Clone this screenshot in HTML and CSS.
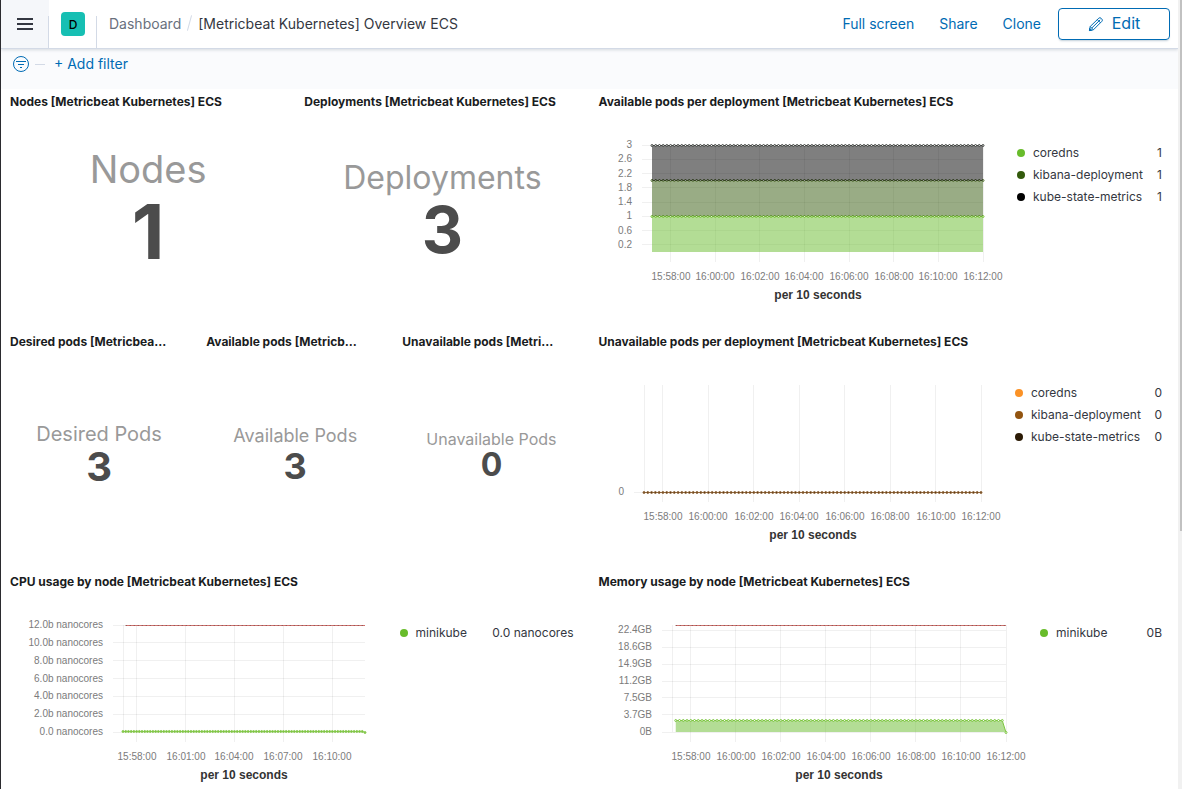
FILE: index.html
```html
<!DOCTYPE html>
<html lang="en">
<head>
<meta charset="utf-8">
<meta name="viewport" content="width=device-width, initial-scale=1">
<title>[Metricbeat Kubernetes] Overview ECS</title>
<link rel="stylesheet" href="styles.css">
</head>
<body>
<div class="app">
  <div class="page">
    <header class="header">
      <button class="menu-button" type="button" aria-label="Toggle navigation">
        <svg width="16" height="16" viewBox="0 0 16 16" fill="#343741"><path d="M0 2h16v2H0zM0 7h16v2H0zM0 12h16v2H0z"/></svg>
      </button>
      <div class="space"><button class="avatar" type="button" aria-label="Default space">D</button></div>
      <nav class="breadcrumbs" aria-label="Breadcrumbs">
        <a class="crumb" href="#">Dashboard</a>
        <span class="crumb-slash"></span>
        <span class="crumb-current">[Metricbeat Kubernetes] Overview ECS</span>
      </nav>
      <div class="actions">
        <button class="action" type="button">Full screen</button>
        <button class="action" type="button">Share</button>
        <button class="action" type="button">Clone</button>
        <button class="edit-button" type="button">
          <svg width="16" height="16" viewBox="0 0 16 16" fill="none" stroke="#006bb4" stroke-width="1"><path d="M1.5 14.5l.7-4 8.6-8.3a1.6 1.6 0 0 1 2.2 0l.9.9a1.6 1.6 0 0 1 0 2.2l-8.5 8.5z"/><path d="M2.2 10.5l3.2 3.3M3.8 12l8.4-8.2M9.3 3.6l3.2 3.2"/><path d="M1.4 14.6l.3-2.2 1.9 1.9z" fill="#006bb4"/></svg>
          <span>Edit</span>
        </button>
      </div>
    </header>

    <div class="filter-bar">
      <button class="filter-menu" type="button" aria-label="Filter options">
        <svg width="16" height="16" viewBox="0 0 16 16" fill="none" stroke="#006bb4"><circle cx="8" cy="8" r="7.5"/><path d="M3 5.5h10M5 8.5h6M7 11.5h2"/></svg>
      </button>
      <span class="filter-dash"></span>
      <button class="add-filter" type="button">+ Add filter</button>
    </div>

    <main class="dashboard">
      <section class="panel quarter">
        <h2 class="panel-title">Nodes [Metricbeat Kubernetes] ECS</h2>
        <div class="metric metric-xl"><div class="metric-label">Nodes</div><div class="metric-value">1</div></div>
      </section>
      <section class="panel quarter">
        <h2 class="panel-title">Deployments [Metricbeat Kubernetes] ECS</h2>
        <div class="metric metric-l"><div class="metric-label">Deployments</div><div class="metric-value">3</div></div>
      </section>
      <section class="panel half">
        <h2 class="panel-title">Available pods per deployment [Metricbeat Kubernetes] ECS</h2>
        <div class="panel-body">
          <div class="chart" data-chart="available"></div>
          <ul class="legend">
            <li><i class="dot green"></i><span>coredns</span><b>1</b></li>
            <li><i class="dot forest"></i><span>kibana-deployment</span><b>1</b></li>
            <li><i class="dot black"></i><span>kube-state-metrics</span><b>1</b></li>
          </ul>
        </div>
      </section>

      <section class="panel sixth">
        <h2 class="panel-title" title="Desired pods [Metricbeat Kubernetes] ECS">Desired pods [Metricbea...</h2>
        <div class="metric metric-m"><div class="metric-label">Desired Pods</div><div class="metric-value">3</div></div>
      </section>
      <section class="panel sixth">
        <h2 class="panel-title" title="Available pods [Metricbeat Kubernetes] ECS">Available pods [Metricb...</h2>
        <div class="metric metric-s"><div class="metric-label">Available Pods</div><div class="metric-value">3</div></div>
      </section>
      <section class="panel sixth">
        <h2 class="panel-title" title="Unavailable pods [Metricbeat Kubernetes] ECS">Unavailable pods [Metri...</h2>
        <div class="metric metric-xs"><div class="metric-label">Unavailable Pods</div><div class="metric-value">0</div></div>
      </section>
      <section class="panel half">
        <h2 class="panel-title">Unavailable pods per deployment [Metricbeat Kubernetes] ECS</h2>
        <div class="panel-body">
          <div class="chart" data-chart="unavailable"></div>
          <ul class="legend legend-medium">
            <li><i class="dot orange"></i><span>coredns</span><b>0</b></li>
            <li><i class="dot brown"></i><span>kibana-deployment</span><b>0</b></li>
            <li><i class="dot umber"></i><span>kube-state-metrics</span><b>0</b></li>
          </ul>
        </div>
      </section>

      <section class="panel half">
        <h2 class="panel-title">CPU usage by node [Metricbeat Kubernetes] ECS</h2>
        <div class="panel-body">
          <div class="chart" data-chart="cpu"></div>
          <ul class="legend legend-wide">
            <li><i class="dot green"></i><span>minikube</span><b>0.0 nanocores</b></li>
          </ul>
        </div>
      </section>
      <section class="panel half">
        <h2 class="panel-title">Memory usage by node [Metricbeat Kubernetes] ECS</h2>
        <div class="panel-body">
          <div class="chart" data-chart="memory"></div>
          <ul class="legend legend-narrow">
            <li><i class="dot green"></i><span>minikube</span><b>0B</b></li>
          </ul>
        </div>
      </section>
    </main>
  </div>
  <div class="scroll-track"><div class="scroll-thumb"></div></div>
</div>
<script src="charts.js"></script>
</body>
</html>
```
FILE: styles.css
```css
* { box-sizing: border-box; }

body {
  margin: 0;
  font-family: Inter, "Liberation Sans", sans-serif;
  font-size: 14px;
  color: #343741;
  background: #fff;
}

button {
  font: inherit;
  padding: 0;
  border: 0;
  background: none;
  cursor: pointer;
}

svg { display: block; }

.app {
  display: flex;
  height: 100vh;
  overflow: hidden;
  border-left: 1px solid #2b2b2f;
}

.page {
  flex: 1;
  min-width: 0;
  background: #fafbfd;
}

.scroll-track {
  width: 4px;
  padding-left: 2px;
  background: #f1f1f1;
}

.scroll-thumb {
  height: 67.3%;
  background: #c1c1c1;
}

/* Header */
.header {
  display: flex;
  height: 49px;
  background: #fff;
  border-bottom: 1px solid #d3dae6;
  box-shadow: 0 1px 3px rgba(65, 78, 101, 0.2);
}

.menu-button {
  display: flex;
  align-items: center;
  justify-content: center;
  width: 48px;
  background: linear-gradient(#d3dae6, #d3dae6) right bottom / 1px 32px no-repeat #f5f7fa;
}

.space {
  display: flex;
  align-items: center;
  justify-content: center;
  width: 48px;
  background: linear-gradient(#d3dae6, #d3dae6) right bottom / 1px 32px no-repeat;
}

.avatar {
  width: 24px;
  height: 24px;
  border-radius: 4px;
  background: #16bfb3;
  color: #000;
  font-size: 12px;
  font-weight: 500;
}

.breadcrumbs {
  display: flex;
  flex: 1;
  align-items: center;
  min-width: 0;
  padding: 0 0 2px 12px;
  white-space: nowrap;
}

.crumb {
  color: #69707d;
  text-decoration: none;
}

.crumb-slash {
  width: 1px;
  height: 16px;
  margin: 0 8px;
  background: #d3dae6;
  transform: rotate(15deg);
}

.crumb-current {
  overflow: hidden;
  text-overflow: ellipsis;
}

.actions {
  display: flex;
  align-items: center;
  gap: 25px;
  padding-right: 8px;
  white-space: nowrap;
}

.action {
  padding-bottom: 2px;
  color: #006bb4;
}

.edit-button {
  display: flex;
  align-items: center;
  justify-content: center;
  gap: 8px;
  width: 112px;
  height: 32px;
  margin-left: -8px;
  border: 1px solid #006bb4;
  border-radius: 4px;
  color: #006bb4;
  font-size: 16px;
  box-shadow: 0 2px 2px -1px rgba(54, 97, 126, 0.3);
}

.edit-button span { padding-bottom: 2px; }

/* Filter bar */
.filter-bar {
  display: flex;
  align-items: center;
  height: 40px;
  padding: 0 12px 10px;
}

.filter-dash {
  width: 10px;
  height: 1px;
  margin: 0 9px 0 6px;
  background: #d3dae6;
}

.add-filter {
  padding-bottom: 2px;
  color: #006bb4;
}

/* Panels */
.dashboard {
  display: grid;
  grid-template-columns: repeat(12, minmax(0, 1fr));
  grid-auto-rows: 240px;
}

.panel {
  display: flex;
  flex-direction: column;
  min-width: 0;
  background: #fff;
}

.half { grid-column: span 6; }
.quarter { grid-column: span 3; }
.sixth { grid-column: span 2; }

.panel-title {
  height: 24px;
  margin: 0;
  padding-left: 9px;
  color: #1a1c21;
  font-size: 12px;
  font-weight: 700;
  line-height: 26px;
  white-space: nowrap;
}

.panel-body {
  display: flex;
  flex: 1;
  gap: 14px;
  padding: 0 16px 0 8px;
}

/* Metrics */
.metric {
  display: flex;
  flex: 1;
  flex-direction: column;
  justify-content: center;
  padding-bottom: 0.7em;
  text-align: center;
  white-space: nowrap;
}

.metric-xl { font-size: 38px; }
.metric-l { font-size: 32px; }
.metric-m { font-size: 20px; }
.metric-s { font-size: 18px; }
.metric-xs { font-size: 16px; }

.metric-label {
  color: #999;
  line-height: 1.25;
}

.metric-value {
  color: #4c4c4c;
  font-size: 2em;
  font-weight: 700;
  line-height: 1;
}

/* Charts */
.chart {
  flex: 1;
  min-width: 0;
}

.chart svg { overflow: visible; }

.chart text {
  fill: #7b7b7b;
  font-family: "Liberation Sans", Arial, sans-serif;
  font-size: 10px;
}

.chart .axis-title {
  fill: #333;
  font-size: 12px;
  font-weight: 700;
}

.grid-line { stroke: rgba(0, 0, 0, 0.06); }

/* Legends */
.legend {
  width: 145px;
  margin: 0;
  padding: 29px 0 0;
  list-style: none;
  font-size: 12px;
  line-height: 22px;
  white-space: nowrap;
}

.legend-medium { width: 147px; }
.legend-wide { width: 174px; }
.legend-narrow { width: 122px; }

.legend li {
  display: flex;
  align-items: center;
  gap: 8px;
}

.legend b {
  margin-left: auto;
  font-weight: 400;
}

.dot {
  width: 8px;
  height: 8px;
  border-radius: 50%;
}

.green { background: #68bc2b; }
.forest { background: #335a0c; }
.black { background: #000; }
.orange { background: #fb9226; }
.brown { background: #925410; }
.umber { background: #2b1a05; }
```
FILE: charts.js
```js
// Time axis, in minutes from 15:57:10 to 16:12:00.
const SPAN = 89 / 6;
const FIRST_TICK = 5 / 6;
const TOP = 32;
const BASE = 139;

const charts = {
  available: {
    left: 54, every: 2, max: 3,
    y: [3, 2.6, 2.2, 1.8, 1.4, 1, 0.6, 0.2].map(v => [v, String(v)]),
    series: [
      { lower: 0, value: 1, color: '#74c42f', area: '#68bc2b' },
      { lower: 1, value: 2, color: '#4d6b28', area: '#335a0c' },
      { lower: 2, value: 3, color: '#3c3f3c', area: '#000000' }
    ]
  },
  unavailable: {
    left: 46, every: 2, max: 3, edge: true,
    y: [[0, '0']],
    series: [{ value: 0, color: '#94683a', fill: '#5c3c1c' }]
  },
  cpu: {
    left: 114, every: 3, max: 12, edge: true, limit: true,
    y: [12, 10, 8, 6, 4, 2, 0].map(v => [v, v ? v + '.0b nanocores' : '0.0 nanocores']),
    series: [{ value: 0.1, color: '#8ccb55', fill: '#7cc63f', drop: true }]
  },
  memory: {
    left: 74, every: 2, max: 23.5, edge: true, limit: true,
    y: [[22.4, '22.4GB'], [18.65, '18.6GB'], [14.9, '14.9GB'], [11.2, '11.2GB'], [7.5, '7.5GB'], [3.75, '3.7GB'], [0, '0B']],
    series: [{ lower: 0, value: 2.5, color: '#7cc63f', area: '#68bc2b', drop: true, from: 1 }]
  }
};

function clock(index, every) {
  const minutes = 58 + index * every;
  return (15 + Math.floor(minutes / 60)) + ':' + String(minutes % 60).padStart(2, '0') + ':00';
}

function draw(host) {
  const c = charts[host.dataset.chart];
  const width = Math.floor(host.getBoundingClientRect().width);
  const right = width - 20;
  const x = m => c.left + (right - c.left) * m / SPAN;
  const y = v => BASE - (BASE - TOP) * v / c.max;
  const snap = n => Math.floor(n) + 0.5;
  const line = (x1, y1, x2, y2) => `<line class="grid-line" x1="${x1}" y1="${y1}" x2="${x2}" y2="${y2}"/>`;
  let out = '';

  c.y.forEach(([v, label]) => {
    const py = snap(y(v));
    out += line(c.left - 10, py, right, py);
    out += `<text x="${c.left - 20}" y="${Math.round(y(v)) + 3}" text-anchor="end">${label}</text>`;
  });
  if (c.edge) out += line(c.left + 0.5, TOP, c.left + 0.5, BASE);
  for (let i = 0, m = FIRST_TICK; m <= SPAN + 0.01; i++, m += c.every) {
    const px = snap(x(m));
    out += line(px, TOP, px, BASE + 10);
    out += `<text x="${Math.round(x(m))}" y="167" text-anchor="middle">${clock(i, c.every)}</text>`;
  }
  out += `<text class="axis-title" x="${Math.round((c.left + right) / 2)}" y="186" text-anchor="middle">per 10 seconds</text>`;

  c.series.forEach(s => {
    const points = [];
    for (let i = s.from || 0; i <= 89; i++) {
      points.push([x(i / 6).toFixed(2), snap(y(s.drop && i === 89 ? 0 : s.value))]);
    }
    const path = 'M' + points.map(p => p.join(' ')).join('L');
    if (s.area) {
      out += `<path d="${path}V${y(s.lower)}H${points[0][0]}Z" fill="${s.area}" fill-opacity=".5"/>`;
    }
    out += `<path d="${path}" fill="none" stroke="${s.color}"/>`;
    points.forEach(p => {
      out += `<circle cx="${p[0]}" cy="${p[1]}" r="1" fill="${s.fill || '#fff'}" stroke="${s.color}"/>`;
    });
  });
  if (c.limit) {
    out += `<path d="M${x(1 / 6)} ${TOP + 0.5}H${right}" stroke="#d0706c"/>`;
    out += `<path d="M${x(1 / 6)} ${TOP + 0.5}H${right}" stroke="#80504e" stroke-dasharray="1 3"/>`;
  }
  host.innerHTML = `<svg width="${width}" height="192" role="img">${out}</svg>`;
}

function drawAll() {
  document.querySelectorAll('.chart').forEach(draw);
}

drawAll();
window.addEventListener('resize', drawAll);
```
